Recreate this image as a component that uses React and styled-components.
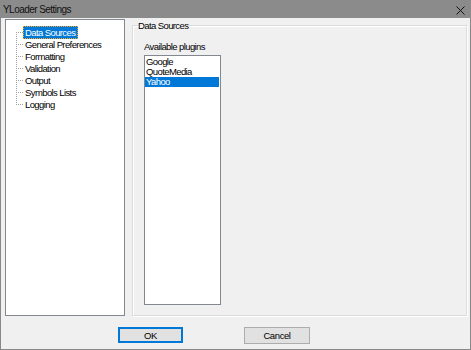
import React from "react";
import styled, { createGlobalStyle } from "styled-components";

const Global = createGlobalStyle`
  html, body { margin: 0; padding: 0; background: #f0f0f0; }
  * { box-sizing: border-box; }
`;

const FONT = `"Liberation Sans", Arial, sans-serif`;

const Window = styled.div`
  width: 471px;
  height: 350px;
  display: flex;
  flex-direction: column;
  background: #f0f0f0;
  border: 1px solid #888888;
  border-top: none;
  font-family: ${FONT};
  font-size: 9.5px;
  letter-spacing: -0.6px;
  color: #000;
`;

const TitleBar = styled.div`
  height: 18px;
  margin: 0 -1px;
  background: #8b8b8b;
  display: flex;
  align-items: center;
  justify-content: space-between;
  padding: 0 6px 0 3px;
`;

const Title = styled.span`
  font-size: 10px;
  letter-spacing: -0.55px;
  color: #111;
  padding-top: 1px;
`;

const Close = styled.svg`
  width: 9px;
  height: 9px;
  margin-top: 2px;
`;

const Body = styled.div`
  flex: 1;
  display: flex;
  flex-direction: column;
  padding: 1px 3px 0 4px;
`;

const MainRow = styled.div`
  height: 297px;
  display: flex;
  gap: 7px;
`;

const Tree = styled.div`
  width: 120px;
  background: #fff;
  border: 1px solid #828790;
  position: relative;
  padding-top: 6px;
`;

const TreeRow = styled.div`
  height: 12px;
  display: flex;
  align-items: center;
  padding-left: 10px;
`;

const Branch = styled.span`
  width: 7px;
  border-top: 1px dotted #a0a0a0;
  flex: none;
`;

const TreeLabel = styled.span`
  line-height: 11px;
  padding: 0 2px 0 1px;
  white-space: nowrap;
  border: 1px ${(p) => (p.$selected ? "dotted #f5a623" : "solid transparent")};
  background: ${(p) => (p.$selected ? "#0078d7" : "transparent")};
  color: ${(p) => (p.$selected ? "#fff" : "#000")};
`;

const Trunk = styled.div`
  position: absolute;
  left: 10px;
  top: 12px;
  height: 73px;
  border-left: 1px dotted #a0a0a0;
`;

const Group = styled.fieldset`
  flex: 1;
  margin: 0;
  margin-top: 1px;
  padding: 0 0 0 5px;
  border: 1px solid #dcdcdc;
  box-shadow: inset 1px 1px 0 #fff, 1px 1px 0 #fff;
  min-width: 0;
  display: flex;
  flex-direction: column;
`;

const Legend = styled.legend`
  padding: 0 1px 0 0;
  margin-left: 0;
  line-height: 11px;
`;

const FieldLabel = styled.div`
  margin: 10px 0 0 6px;
  line-height: 11px;
  height: 12px;
`;

const ListBox = styled.div`
  margin: 2px 0 0 6px;
  width: 77px;
  height: 250px;
  background: #fff;
  border: 1px solid #828790;
  padding: 1px 1px 0 0;
`;

const ListItem = styled.div`
  height: 10px;
  line-height: 10px;
  padding-left: 1px;
  background: ${(p) => (p.$selected ? "#0078d7" : "transparent")};
  color: ${(p) => (p.$selected ? "#fff" : "#000")};
`;

const ButtonRow = styled.div`
  display: flex;
  gap: 61px;
  padding-left: 113px;
  margin-top: 11px;
`;

const Button = styled.button`
  width: ${(p) => (p.$primary ? 65 : 66)}px;
  height: ${(p) => (p.$primary ? 16 : 17)}px;
  padding: 0;
  font-family: ${FONT};
  font-size: 9.5px;
  letter-spacing: -0.4px;
  color: #000;
  background: #e1e1e1;
  border: ${(p) => (p.$primary ? "2px solid #0078d7" : "1px solid #adadad")};
`;

const treeItems = [
  "Data Sources",
  "General Preferences",
  "Formatting",
  "Validation",
  "Output",
  "Symbols Lists",
  "Logging",
];

const plugins = ["Google", "QuoteMedia", "Yahoo"];

export default function App() {
  return (
    <>
      <Global />
      <Window>
        <TitleBar>
          <Title>YLoader Settings</Title>
          <Close viewBox="0 0 9 9">
            <path d="M0.5 0.5 L8.5 8.5 M8.5 0.5 L0.5 8.5" stroke="#111" strokeWidth="1" fill="none" />
          </Close>
        </TitleBar>
        <Body>
          <MainRow>
            <Tree>
              <Trunk />
              {treeItems.map((t, i) => (
                <TreeRow key={t}>
                  <Branch />
                  <TreeLabel $selected={i === 0}>{t}</TreeLabel>
                </TreeRow>
              ))}
            </Tree>
            <Group>
              <Legend>Data Sources</Legend>
              <FieldLabel>Available plugins</FieldLabel>
              <ListBox>
                {plugins.map((p) => (
                  <ListItem key={p} $selected={p === "Yahoo"}>
                    {p}
                  </ListItem>
                ))}
              </ListBox>
            </Group>
          </MainRow>
          <ButtonRow>
            <Button $primary>OK</Button>
            <Button>Cancel</Button>
          </ButtonRow>
        </Body>
      </Window>
    </>
  );
}
